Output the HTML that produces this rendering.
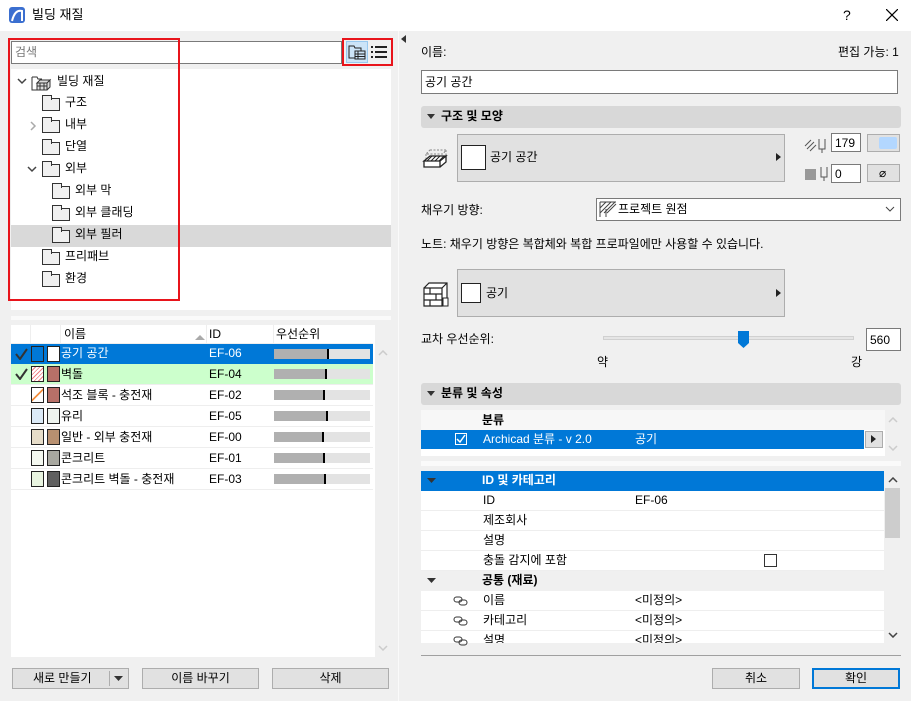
<!DOCTYPE html>
<html><head><meta charset="utf-8"><style>
*{box-sizing:border-box;margin:0;padding:0}
body{width:917px;height:701px;overflow:hidden;background:#fff;font-family:"Liberation Sans","Noto Sans CJK KR","NanumGothic",sans-serif;font-size:12px;color:#000;position:relative}
.a{position:absolute}
.t{position:absolute;white-space:nowrap;line-height:14px}
.fold{position:absolute;width:18px;height:13px;border:1.3px solid #333;background:#f0f0f0}
.fold:before{content:"";position:absolute;left:-1.3px;top:-4px;width:8px;height:4px;border:1.3px solid #333;border-bottom:none;background:#f0f0f0}
.btn{position:absolute;background:#e1e1e1;border:1px solid #adadad;text-align:center;line-height:18px}
.row{position:absolute;left:11px;width:362px;height:21px;border-bottom:1px solid #eee}
.bar{position:absolute;left:274px;top:5px;width:96px;height:10px;background:#e3e3e3}
.bar i{position:absolute;left:0;top:0;height:10px;background:#b0b0b0;border-right:2px solid #000}
.sw{position:absolute;top:2px;width:13px;height:16px;border:1px solid #222}
.prow{position:absolute;left:421px;width:463px;height:20px;background:#fff;border-bottom:1px solid #eee}
</style></head><body>
<!-- title -->
<div class="a" style="left:9px;top:7px;width:16px;height:16px;background:#3b6fd0;border-radius:3px"></div>
<svg class="a" style="left:9px;top:7px" width="16" height="16"><path d="M3 14 Q6 2 13 4 L13 14" fill="none" stroke="#fff" stroke-width="2"/></svg>
<div class="t" style="left:32px;top:8px;font-size:13px">빌딩 재질</div>
<div class="t" style="left:843px;top:8px;font-size:14px">?</div>
<svg class="a" style="left:886px;top:9px" width="12" height="12"><path d="M0 0L12 12M12 0L0 12" stroke="#000" stroke-width="1.2"/></svg>
<div class="a" style="left:0;top:31px;width:911px;height:670px;background:#f0f0f0"></div>
<div class="a" style="left:911px;top:0;width:6px;height:701px;background:#fff"></div>
<!-- left -->
<div class="a" style="left:11px;top:41px;width:331px;height:23px;background:#fff;border:1px solid #7a7a7a"></div>
<div class="t" style="left:15px;top:45px;color:#777">검색</div>
<div class="a" style="left:346px;top:41px;width:22px;height:22px;background:#cce4f7;border:1px solid #99c9ef"></div>
<svg class="a" style="left:348px;top:44px" width="18" height="16"><path d="M1 2h5l1 2h6v10H1z" fill="none" stroke="#222"/><rect x="7" y="7" width="10" height="8" fill="#cce4f7" stroke="#222"/><path d="M7 10h10M7 12.5h10M10 7v8" stroke="#222"/></svg>
<svg class="a" style="left:370px;top:45px" width="18" height="14"><path d="M1 2h2M5 2h12M1 7h2M5 7h12M1 12h2M5 12h12" stroke="#222" stroke-width="2"/></svg>
<div class="a" style="left:342px;top:38px;width:51px;height:28px;border:2px solid #e8141b"></div>
<div class="a" style="left:11px;top:69px;width:380px;height:241px;background:#fff"></div>
<div class="a" style="left:11px;top:225px;width:380px;height:22px;background:#d9d9d9"></div>
<svg class="a" style="left:17px;top:77px" width="10" height="8"><path d="M1 2l4 4 4-4" fill="none" stroke="#444" stroke-width="1.5"/></svg>
<svg class="a" style="left:31px;top:75px" width="22" height="16"><path d="M1 2h5l1 2h4M1 2v13h5" fill="none" stroke="#333"/><path d="M6 8l3-3h10l-3 3zM6 8h10v7H6zM16 8l3-3v7l-3 3" fill="#ddd" stroke="#333"/><path d="M6 11h10M9 8v7M13 8v7" stroke="#333"/></svg>
<div class="t" style="left:57px;top:74px">빌딩 재질</div>
<div class="fold" style="left:42px;top:98px"></div><div class="t" style="left:65px;top:95px">구조</div>
<svg class="a" style="left:29px;top:121px" width="8" height="10"><path d="M2 1l4 4-4 4" fill="none" stroke="#aaa" stroke-width="1.5"/></svg>
<div class="fold" style="left:42px;top:120px"></div><div class="t" style="left:65px;top:117px">내부</div>
<div class="fold" style="left:42px;top:142px"></div><div class="t" style="left:65px;top:139px">단열</div>
<svg class="a" style="left:27px;top:165px" width="10" height="8"><path d="M1 2l4 4 4-4" fill="none" stroke="#444" stroke-width="1.5"/></svg>
<div class="fold" style="left:42px;top:164px"></div><div class="t" style="left:65px;top:161px">외부</div>
<div class="fold" style="left:52px;top:186px"></div><div class="t" style="left:75px;top:183px">외부 막</div>
<div class="fold" style="left:52px;top:208px"></div><div class="t" style="left:75px;top:205px">외부 클래딩</div>
<div class="fold" style="left:52px;top:230px"></div><div class="t" style="left:75px;top:227px">외부 필러</div>
<div class="fold" style="left:42px;top:252px"></div><div class="t" style="left:65px;top:249px">프리패브</div>
<div class="fold" style="left:42px;top:274px"></div><div class="t" style="left:65px;top:271px">환경</div>
<div class="a" style="left:8px;top:38px;width:172px;height:263px;border:2px solid #e8141b"></div>
<div class="a" style="left:11px;top:316px;width:380px;height:4px;background:#fafafa"></div>
<!-- list -->
<div class="a" style="left:11px;top:325px;width:364px;height:332px;background:#fff"></div>
<div class="a" style="left:11px;top:325px;width:362px;height:19px;border-bottom:1px solid #eee"></div>
<div class="a" style="left:30px;top:325px;width:1px;height:19px;background:#eee"></div>
<div class="a" style="left:60px;top:325px;width:1px;height:19px;background:#eee"></div>
<div class="a" style="left:206px;top:325px;width:1px;height:19px;background:#eee"></div>
<div class="a" style="left:273px;top:325px;width:1px;height:19px;background:#eee"></div>
<div class="t" style="left:64px;top:327px">이름</div>
<svg class="a" style="left:195px;top:334px" width="10" height="6"><path d="M0 6L5 1 10 6z" fill="#aaa"/></svg>
<div class="t" style="left:209px;top:327px">ID</div>
<div class="t" style="left:276px;top:327px">우선순위</div>
<svg class="a" style="left:378px;top:350px" width="10" height="6"><path d="M1 5l4-4 4 4" fill="none" stroke="#ccc" stroke-width="1.5"/></svg>
<svg class="a" style="left:378px;top:645px" width="10" height="6"><path d="M1 1l4 4 4-4" fill="none" stroke="#ccc" stroke-width="1.5"/></svg>

<div class="row" style="top:344px;background:#0078d7;color:#fff;border:none;height:20px"><div class="t" style="left:50px;top:2px">공기 공간</div><div class="t" style="left:198px;top:2px">EF-06</div>
<svg class="a" style="left:4px;top:4px" width="13" height="12"><path d="M1 6l4 5 7-10" fill="none" stroke="#333" stroke-width="2"/></svg>
<div class="sw" style="left:20px;background:#0078d7"></div><div class="sw" style="left:36px;background:#fff"></div>
<div class="bar" style="left:263px;width:96px"><i style="width:55px"></i></div></div>

<div class="row" style="top:364px;background:#ccffcc"><div class="t" style="left:50px;top:3px">벽돌</div><div class="t" style="left:198px;top:3px">EF-04</div>
<svg class="a" style="left:4px;top:4px" width="13" height="12"><path d="M1 6l4 5 7-10" fill="none" stroke="#333" stroke-width="2"/></svg>
<div class="sw" style="left:20px;background:repeating-linear-gradient(135deg,#fff 0 2px,#f08080 2px 3px)"></div><div class="sw" style="left:36px;background:#b87068"></div>
<div class="bar" style="left:263px"><i style="width:53px"></i></div></div>

<div class="row" style="top:385px"><div class="t" style="left:50px;top:3px">석조 블록 - 충전재</div><div class="t" style="left:198px;top:3px">EF-02</div>
<div class="sw" style="left:20px;background:linear-gradient(135deg,#fff 45%,#f39040 45% 55%,#fff 55%)"></div><div class="sw" style="left:36px;background:#b87068"></div>
<div class="bar" style="left:263px"><i style="width:51px"></i></div></div>

<div class="row" style="top:406px"><div class="t" style="left:50px;top:3px">유리</div><div class="t" style="left:198px;top:3px">EF-05</div>
<div class="sw" style="left:20px;background:#dbeaf7"></div><div class="sw" style="left:36px;background:#eef4ef"></div>
<div class="bar" style="left:263px"><i style="width:54px"></i></div></div>

<div class="row" style="top:427px"><div class="t" style="left:50px;top:3px">일반 - 외부 충전재</div><div class="t" style="left:198px;top:3px">EF-00</div>
<div class="sw" style="left:20px;background:#e6dcc8"></div><div class="sw" style="left:36px;background:#b89070"></div>
<div class="bar" style="left:263px"><i style="width:50px"></i></div></div>

<div class="row" style="top:448px"><div class="t" style="left:50px;top:3px">콘크리트</div><div class="t" style="left:198px;top:3px">EF-01</div>
<div class="sw" style="left:20px;background:#f4f8f0"></div><div class="sw" style="left:36px;background:#a8a8a0"></div>
<div class="bar" style="left:263px"><i style="width:51px"></i></div></div>

<div class="row" style="top:469px"><div class="t" style="left:50px;top:3px">콘크리트 벽돌 - 충전재</div><div class="t" style="left:198px;top:3px">EF-03</div>
<div class="sw" style="left:20px;background:#e8f4e0"></div><div class="sw" style="left:36px;background:#606060"></div>
<div class="bar" style="left:263px"><i style="width:52px"></i></div></div>

<div class="btn" style="left:12px;top:668px;width:117px;height:21px"><span style="position:absolute;left:20px">새로 만들기</span><span style="position:absolute;left:96px;top:2px;width:1px;height:15px;background:#adadad"></span><svg style="position:absolute;left:101px;top:7px" width="9" height="5"><path d="M0 0h9L4.5 5z" fill="#333"/></svg></div>
<div class="btn" style="left:142px;top:668px;width:117px;height:21px">이름 바꾸기</div>
<div class="btn" style="left:272px;top:668px;width:117px;height:21px">삭제</div>
<svg class="a" style="left:401px;top:35px" width="6" height="8"><path d="M5 0v8L0 4z" fill="#333"/></svg>
<div class="a" style="left:398px;top:31px;width:1px;height:670px;background:#fafafa"></div>
<!-- right -->
<div class="t" style="left:421px;top:45px">이름:</div>
<div class="t" style="left:838px;top:45px">편집 가능: 1</div>
<div class="a" style="left:421px;top:70px;width:477px;height:24px;background:#fff;border:1px solid #7a7a7a"></div>
<div class="t" style="left:425px;top:75px">공기 공간</div>
<div class="a" style="left:421px;top:106px;width:480px;height:22px;background:#d8d8d8;border-radius:3px"></div>
<svg class="a" style="left:427px;top:114px" width="8" height="5"><path d="M0 0h8L4 5z" fill="#333"/></svg>
<div class="t" style="left:441px;top:109px;font-weight:bold">구조 및 모양</div>
<svg class="a" style="left:422px;top:145px" width="30" height="28"><path d="M8 5h16l-3 4H4zM4 9v6M24 5v6" fill="none" stroke="#888" stroke-dasharray="2 1.5"/><path d="M2 16l6-5h16l-6 5zM2 16h16v6H2zM18 16l6-5v6l-6 5" fill="#fff" stroke="#222" stroke-width="1.3"/><path d="M5 16l5-5M9 16l5-5M13 16l5-5M17 16l5-5" stroke="#222"/></svg>
<div class="a" style="left:457px;top:134px;width:328px;height:48px;background:#e1e1e1;border:1px solid #adadad"></div>
<div class="a" style="left:461px;top:145px;width:25px;height:25px;background:#fff;border:1px solid #222"></div>
<div class="t" style="left:490px;top:150px">공기 공간</div>
<svg class="a" style="left:776px;top:153px" width="5" height="8"><path d="M0 0l5 4-5 4z" fill="#222"/></svg>
<svg class="a" style="left:804px;top:137px" width="24" height="16"><path d="M1 9l6-6M3 12l7-7M6 14l6-6M15 2v10h6V2M18 12v4" fill="none" stroke="#555"/></svg>
<div class="a" style="left:831px;top:133px;width:30px;height:19px;background:#fff;border:1px solid #7a7a7a"></div><div class="t" style="left:835px;top:136px">179</div>
<div class="a" style="left:867px;top:134px;width:33px;height:18px;background:#e1e1e1;border:1px solid #adadad"></div>
<div class="a" style="left:879px;top:137px;width:18px;height:12px;background:#b3d7ff;border-radius:2px"></div>
<div class="a" style="left:805px;top:169px;width:11px;height:11px;background:#999"></div>
<svg class="a" style="left:818px;top:165px" width="12" height="18"><path d="M3 2v10h6V2M6 12v4" fill="none" stroke="#555"/></svg>
<div class="a" style="left:831px;top:164px;width:30px;height:19px;background:#fff;border:1px solid #7a7a7a"></div><div class="t" style="left:835px;top:167px">0</div>
<div class="a" style="left:867px;top:164px;width:33px;height:18px;background:#e1e1e1;border:1px solid #adadad"></div>
<div class="t" style="left:879px;top:166px">⌀</div>
<div class="t" style="left:421px;top:203px">채우기 방향:</div>
<div class="a" style="left:596px;top:198px;width:305px;height:23px;background:#fff;border:1px solid #7a7a7a"></div>
<svg class="a" style="left:599px;top:201px" width="18" height="16"><path d="M1 1h16M1 1v15M1 7l6-6M1 12l11-11M5 12l11-11M8 12l9-9" fill="none" stroke="#444"/><path d="M7 8v8" stroke="#444"/></svg>
<div class="t" style="left:618px;top:202px">프로젝트 원점</div>
<svg class="a" style="left:885px;top:206px" width="10" height="6"><path d="M1 1l4 4 4-4" fill="none" stroke="#444"/></svg>
<div class="t" style="left:421px;top:237px">노트: 채우기 방향은 복합체와 복합 프로파일에만 사용할 수 있습니다.</div>
<svg class="a" style="left:422px;top:280px" width="30" height="30"><path d="M2 8h18v18H2zM2 14h18M2 20h18M8 8v6M14 14v6M8 20v6M2 8l5-5h18v16l-5 5M20 8l5-5" fill="#fff" stroke="#222" stroke-width="1.2"/><path d="M21 18v8h5v-8z" fill="#fff" stroke="#222"/></svg>
<div class="a" style="left:457px;top:269px;width:328px;height:48px;background:#e1e1e1;border:1px solid #adadad"></div>
<div class="a" style="left:461px;top:283px;width:20px;height:20px;background:#fff;border:1px solid #222"></div>
<div class="t" style="left:486px;top:286px">공기</div>
<svg class="a" style="left:776px;top:289px" width="5" height="8"><path d="M0 0l5 4-5 4z" fill="#222"/></svg>
<div class="t" style="left:421px;top:332px">교차 우선순위:</div>
<div class="a" style="left:603px;top:336px;width:251px;height:4px;background:#e5e5e5;border:1px solid #d0d0d0"></div>
<svg class="a" style="left:738px;top:331px" width="11" height="17"><path d="M0 0h11v12l-5.5 5L0 12z" fill="#0078d7"/></svg>
<div class="a" style="left:866px;top:328px;width:35px;height:23px;background:#fff;border:1px solid #7a7a7a"></div><div class="t" style="left:870px;top:333px">560</div>
<div class="t" style="left:597px;top:355px">약</div>
<div class="t" style="left:851px;top:355px">강</div>
<div class="a" style="left:421px;top:383px;width:480px;height:22px;background:#d8d8d8;border-radius:3px"></div>
<svg class="a" style="left:427px;top:391px" width="8" height="5"><path d="M0 0h8L4 5z" fill="#333"/></svg>
<div class="t" style="left:441px;top:386px;font-weight:bold">분류 및 속성</div>
<div class="a" style="left:421px;top:410px;width:464px;height:46px;background:#fff"></div>
<div class="a" style="left:421px;top:410px;width:464px;height:20px;background:#f7f7f7"></div>
<div class="t" style="left:482px;top:413px;font-weight:bold">분류</div>
<div class="a" style="left:421px;top:430px;width:443px;height:19px;background:#0078d7"></div>
<div class="a" style="left:455px;top:433px;width:12px;height:12px;border:1px solid #fff"></div>
<svg class="a" style="left:456px;top:434px" width="10" height="10"><path d="M1 5l3 3 5-7" fill="none" stroke="#fff" stroke-width="1.5"/></svg>
<div class="t" style="left:483px;top:432px;color:#fff">Archicad 분류 - v 2.0</div>
<div class="t" style="left:635px;top:432px;color:#fff">공기</div>
<div class="a" style="left:865px;top:431px;width:18px;height:17px;background:#e1e1e1;border:1px solid #adadad"></div>
<svg class="a" style="left:871px;top:435px" width="5" height="8"><path d="M0 0l5 4-5 4z" fill="#222"/></svg>
<svg class="a" style="left:888px;top:417px" width="10" height="6"><path d="M1 5l4-4 4 4" fill="none" stroke="#ccc" stroke-width="1.5"/></svg>
<svg class="a" style="left:888px;top:445px" width="10" height="6"><path d="M1 1l4 4 4-4" fill="none" stroke="#ccc" stroke-width="1.5"/></svg>
<div class="a" style="left:421px;top:461px;width:480px;height:5px;background:#fafafa"></div>
<div class="a" style="left:421px;top:471px;width:463px;height:20px;background:#0078d7"></div>
<svg class="a" style="left:427px;top:478px" width="9" height="5"><path d="M0 0h9L4.5 5z" fill="#333"/></svg>
<div class="t" style="left:482px;top:473px;color:#fff;font-weight:bold">ID 및 카테고리</div>
<div class="prow" style="top:491px"></div><div class="t" style="left:483px;top:493px">ID</div><div class="t" style="left:635px;top:493px">EF-06</div>
<div class="prow" style="top:511px"></div><div class="t" style="left:483px;top:513px">제조회사</div>
<div class="prow" style="top:531px"></div><div class="t" style="left:483px;top:533px">설명</div>
<div class="prow" style="top:551px"></div><div class="t" style="left:483px;top:553px">충돌 감지에 포함</div>
<div class="a" style="left:764px;top:554px;width:13px;height:13px;border:1px solid #333;background:#fff"></div>
<div class="a" style="left:421px;top:571px;width:463px;height:20px;background:#f0f0f0"></div>
<svg class="a" style="left:427px;top:578px" width="9" height="5"><path d="M0 0h9L4.5 5z" fill="#333"/></svg>
<div class="t" style="left:482px;top:573px;font-weight:bold">공통 (재료)</div>
<div class="prow" style="top:591px"></div><div class="t" style="left:483px;top:593px">이름</div><div class="t" style="left:635px;top:593px">&lt;미정의&gt;</div>
<div class="prow" style="top:611px"></div><div class="t" style="left:483px;top:613px">카테고리</div><div class="t" style="left:635px;top:613px">&lt;미정의&gt;</div>
<div class="a" style="left:421px;top:631px;width:463px;height:12px;background:#fff;overflow:hidden"><div class="t" style="left:62px;top:2px">설명</div><div class="t" style="left:214px;top:2px">&lt;미정의&gt;</div></div>
<svg class="a" style="left:453px;top:596px" width="16" height="50"><g fill="none" stroke="#333"><rect x="1" y="1" width="8" height="5" rx="2.5"/><rect x="6" y="4" width="8" height="5" rx="2.5"/><rect x="1" y="21" width="8" height="5" rx="2.5"/><rect x="6" y="24" width="8" height="5" rx="2.5"/><rect x="1" y="41" width="8" height="5" rx="2.5"/><rect x="6" y="44" width="8" height="5" rx="2.5"/></g></svg>
<div class="a" style="left:885px;top:488px;width:15px;height:50px;background:#cdcdcd"></div>
<svg class="a" style="left:888px;top:477px" width="10" height="6"><path d="M1 5l4-4 4 4" fill="none" stroke="#444" stroke-width="1.5"/></svg>
<svg class="a" style="left:888px;top:632px" width="10" height="6"><path d="M1 1l4 4 4-4" fill="none" stroke="#444" stroke-width="1.5"/></svg>
<div class="a" style="left:421px;top:655px;width:480px;height:1px;background:#a0a0a0"></div>
<div class="btn" style="left:712px;top:668px;width:88px;height:21px">취소</div>
<div class="btn" style="left:812px;top:668px;width:88px;height:21px;border:2px solid #0078d7;line-height:17px">확인</div>
</body></html>
